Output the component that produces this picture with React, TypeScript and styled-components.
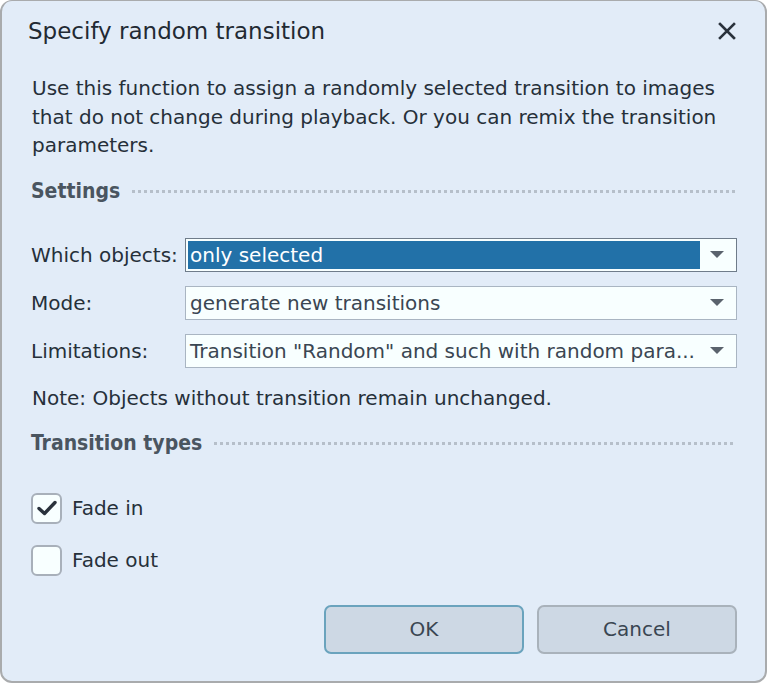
import React from "react";
import styled, { createGlobalStyle } from "styled-components";

const Global = createGlobalStyle`
  html, body { margin: 0; padding: 0; background: #ffffff; }
  body { font-family: "DejaVu Sans", sans-serif; }
  * { box-sizing: border-box; }
`;

const Window = styled.div`
  width: 767px;
  height: 683px;
  background: #e2ecf8;
  border: 2px solid #a9abad;
  border-top-width: 1px;
  border-radius: 12px;
  display: flex;
  flex-direction: column;
  color: #26303a;
  font-family: "DejaVu Sans", sans-serif;
`;

const TitleBar = styled.div`
  height: 62px;
  display: flex;
  align-items: center;
  justify-content: space-between;
  padding: 0 26px 0 26px;
`;

const Title = styled.div`
  font-size: 23px;
  color: #222a33;
  margin-top: -2px;
`;

const CloseButton = styled.div`
  width: 24px;
  height: 24px;
  display: flex;
  align-items: center;
  justify-content: center;
  margin-top: -2px;
`;

const Body = styled.div`
  padding: 11px 28px 0 30px;
  display: flex;
  flex-direction: column;
  flex: 1;
`;

const Description = styled.p`
  margin: 0;
  font-size: 20px;
  line-height: 28.5px;
`;

const SectionHeader = styled.div<{ $top: number }>`
  display: flex;
  align-items: center;
  margin-top: ${(p) => p.$top}px;
  height: 30px;
`;

const SectionTitle = styled.span`
  font-family: "DejaVu Sans Condensed", "DejaVu Sans", sans-serif;
  font-stretch: condensed;
  font-size: 21px;
  color: #4a5560;
  font-weight: bold;
  margin-right: 12px;
  margin-left: -1px;
`;

const Dots = styled.div`
  flex: 1;
  height: 3px;
  margin-right: 2px;
  background-image: linear-gradient(to right, #b6bfca 3px, transparent 3px);
  background-size: 6px 3px;
  background-repeat: repeat-x;
  margin-top: 2px;
`;

const FormRow = styled.div<{ $top: number }>`
  display: grid;
  grid-template-columns: 153px 1fr;
  align-items: center;
  margin-top: ${(p) => p.$top}px;
`;

const Label = styled.span`
  font-size: 20px;
  margin-left: -1px;
`;

const Combo = styled.div<{ $focused?: boolean }>`
  height: 34px;
  border: 1px solid ${(p) => (p.$focused ? "#6f7c8a" : "#a9b5c2")};
  background: #f8ffff;
  display: flex;
  align-items: center;
  padding: 2px;
`;

const ComboValue = styled.div<{ $selected?: boolean }>`
  flex: 1;
  height: 100%;
  display: flex;
  align-items: center;
  font-size: 20px;
  padding-left: 2px;
  color: ${(p) => (p.$selected ? "#ffffff" : "#3a4652")};
  background: ${(p) => (p.$selected ? "#2271a8" : "transparent")};
  white-space: nowrap;
  overflow: hidden;
`;

const Arrow = styled.div`
  width: 34px;
  display: flex;
  justify-content: center;
  align-items: center;
`;

const Note = styled.div`
  font-size: 20px;
  margin-top: 18px;
`;

const CheckRow = styled.label<{ $top: number }>`
  display: flex;
  align-items: center;
  gap: 10px;
  margin-top: ${(p) => p.$top}px;
  font-size: 20px;
  margin-left: -1px;
`;

const Box = styled.span`
  width: 31px;
  height: 31px;
  border: 2px solid #a8b0ba;
  border-radius: 6px;
  background: #f8ffff;
  display: flex;
  align-items: center;
  justify-content: center;
`;

const ButtonRow = styled.div`
  display: flex;
  justify-content: flex-end;
  gap: 13px;
  margin-top: 29px;
`;

const Button = styled.div<{ $default?: boolean }>`
  width: 200px;
  height: 49px;
  border: 2px solid ${(p) => (p.$default ? "#6aa3bd" : "#a9b2bb")};
  border-radius: 7px;
  background: #cdd8e4;
  display: flex;
  align-items: center;
  justify-content: center;
  font-size: 20px;
  color: #3a4652;
`;

const ArrowIcon = () => (
  <svg width="14" height="8" viewBox="0 0 14 8">
    <path d="M0 0 H14 L7 7 Z" fill="#5a636d" />
  </svg>
);

export default function App() {
  return (
    <>
      <Global />
      <Window>
        <TitleBar>
          <Title>Specify random transition</Title>
          <CloseButton>
            <svg width="18" height="18" viewBox="0 0 18 18">
              <path d="M2 2 L16 16 M16 2 L2 16" stroke="#2a323c" strokeWidth="2.6" strokeLinecap="square" />
            </svg>
          </CloseButton>
        </TitleBar>
        <Body>
          <Description>
            Use this function to assign a randomly selected transition to images
            <br />
            that do not change during playback. Or you can remix the transition
            <br />
            parameters.
          </Description>
          <SectionHeader $top={16}>
            <SectionTitle>Settings</SectionTitle>
            <Dots />
          </SectionHeader>
          <FormRow $top={32}>
            <Label>Which objects:</Label>
            <Combo $focused>
              <ComboValue $selected>only selected</ComboValue>
              <Arrow><ArrowIcon /></Arrow>
            </Combo>
          </FormRow>
          <FormRow $top={14}>
            <Label>Mode:</Label>
            <Combo>
              <ComboValue>generate new transitions</ComboValue>
              <Arrow><ArrowIcon /></Arrow>
            </Combo>
          </FormRow>
          <FormRow $top={14}>
            <Label>Limitations:</Label>
            <Combo>
              <ComboValue>Transition "Random" and such with random para...</ComboValue>
              <Arrow><ArrowIcon /></Arrow>
            </Combo>
          </FormRow>
          <Note>Note: Objects without transition remain unchanged.</Note>
          <SectionHeader $top={18}>
            <SectionTitle>Transition types</SectionTitle>
            <Dots />
          </SectionHeader>
          <CheckRow $top={35}>
            <Box>
              <svg width="20" height="16" viewBox="0 0 20 16">
                <path d="M2 8.5 L7.5 13.5 L18 2.5" stroke="#2a323c" strokeWidth="3.4" fill="none" strokeLinecap="round" strokeLinejoin="round" />
              </svg>
            </Box>
            Fade in
          </CheckRow>
          <CheckRow $top={21}>
            <Box />
            Fade out
          </CheckRow>
          <ButtonRow>
            <Button $default>OK</Button>
            <Button>Cancel</Button>
          </ButtonRow>
        </Body>
      </Window>
    </>
  );
}
